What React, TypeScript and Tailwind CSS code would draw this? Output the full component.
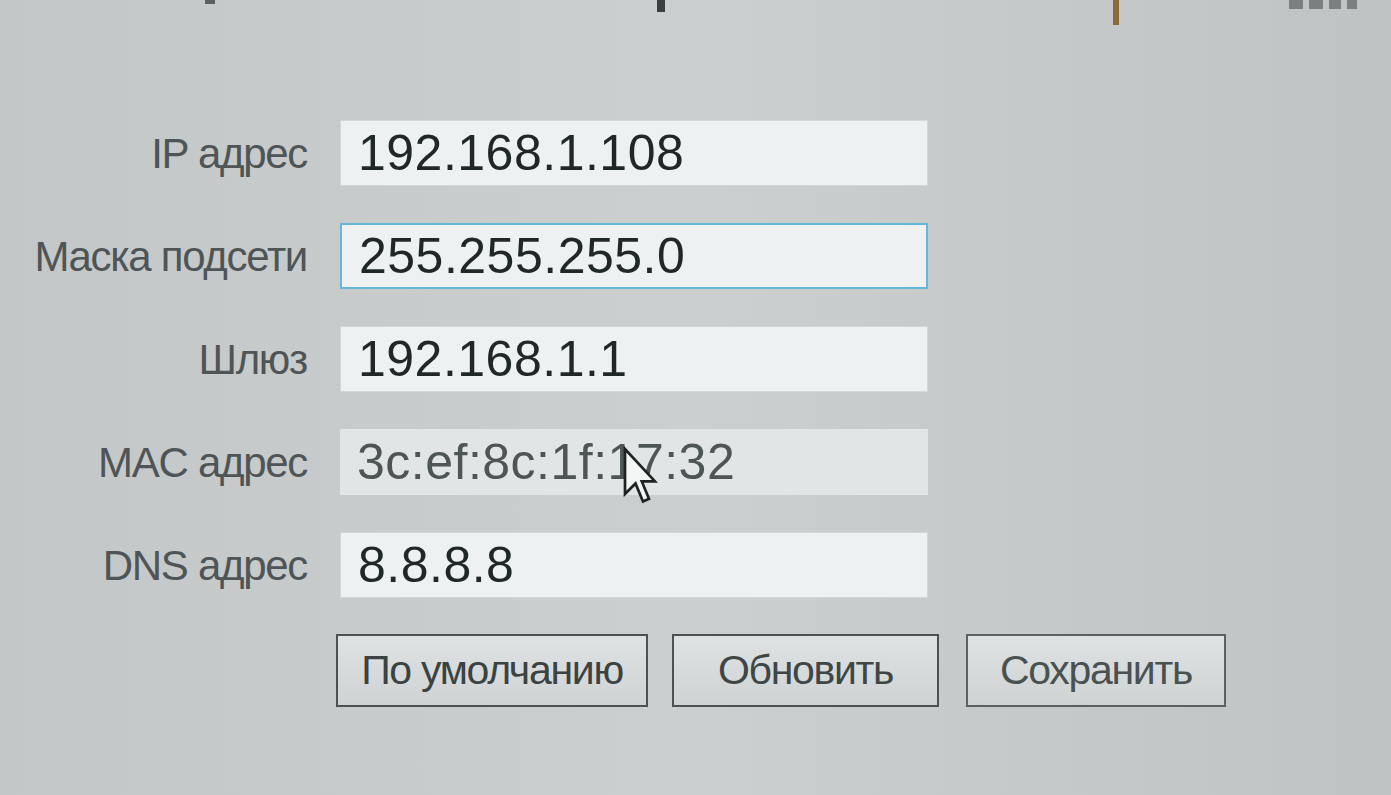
import React from "react";

type Field = {
  label: string;
  value: string;
  focused?: boolean;
  readOnly?: boolean;
};

const fields: Field[] = [
  { label: "IP адрес", value: "192.168.1.108" },
  { label: "Маска подсети", value: "255.255.255.0", focused: true },
  { label: "Шлюз", value: "192.168.1.1" },
  { label: "MAC адрес", value: "3c:ef:8c:1f:17:32", readOnly: true },
  { label: "DNS адрес", value: "8.8.8.8" },
];

const sans = { fontFamily: '"Liberation Sans", Arial, sans-serif' };

const Cursor: React.FC = () => (
  <svg
    className="absolute left-[622px] top-[446px]"
    width="36"
    height="60"
    viewBox="0 0 12 20"
  >
    <path
      d="M1 1 L1 16 L4.5 12.5 L7 18.5 L9 17.6 L6.6 11.8 L11 11.8 Z"
      fill="#f4f6f6"
      stroke="#1c2322"
      strokeWidth="0.9"
    />
  </svg>
);

const App: React.FC = () => {
  return (
    <div
      className="relative w-[1391px] h-[795px] overflow-hidden bg-gradient-to-r from-[#c3c7c7] via-[#cbcfcf] to-[#bfc3c3]"
      style={sans}
    >
      {/* edges of the row above, cut off by the top of the photo */}
      <div className="flex h-[28px] items-start">
        <div className="ml-[205px] h-[4px] w-[10px] bg-[#5b6060]" />
        <div className="ml-[442px] h-[12px] w-[8px] bg-[#3a3f40]" />
        <div className="ml-[448px] h-[25px] w-[6px] bg-[#8a6a3c]" />
        <div className="ml-[170px] flex gap-[6px]">
          <div className="h-[9px] w-[14px] bg-[#7a7f80]" />
          <div className="h-[9px] w-[14px] bg-[#7a7f80]" />
          <div className="h-[9px] w-[12px] bg-[#7a7f80]" />
          <div className="h-[9px] w-[10px] bg-[#7a7f80]" />
        </div>
      </div>

      <div className="flex flex-col gap-[37px] pt-[92px]">
        {fields.map((f) => (
          <div key={f.label} className="flex items-center gap-[33px]">
            <div className="w-[307px] text-right text-[42px] tracking-[-1.3px] text-[#4f5556]">
              {f.label}
            </div>
            <div
              className={
                "flex h-[66px] w-[588px] items-center pl-[17px] text-[50px] tracking-[0.5px] " +
                (f.focused
                  ? "border-2 border-[#66b6dc] bg-[#eef1f1] text-[#1f2827]"
                  : f.readOnly
                  ? "bg-[#e2e5e5] text-[#4e5555]"
                  : "border border-[#d2d6d6] bg-[#eef1f1] text-[#1f2827]")
              }
            >
              {f.value}
            </div>
          </div>
        ))}
      </div>

      <div className="flex gap-[24px] pl-[336px] pt-[36px]">
        <button className="h-[73px] w-[312px] border-2 border-[#4b5252] bg-gradient-to-b from-[#dfe2e2] to-[#cfd3d3] text-[41px] tracking-[-1.3px] text-[#3b4242]">
          По умолчанию
        </button>
        <button className="h-[73px] w-[267px] border-2 border-[#4b5252] bg-gradient-to-b from-[#dfe2e2] to-[#cfd3d3] text-[41px] tracking-[-1.3px] text-[#3f4646]">
          Обновить
        </button>
        <button className="ml-[3px] h-[73px] w-[260px] border-2 border-[#5a6161] bg-gradient-to-b from-[#dfe2e2] to-[#cfd3d3] text-[41px] tracking-[-1.3px] text-[#4a5151]">
          Сохранить
        </button>
      </div>

      <Cursor />
    </div>
  );
};

export default App;
